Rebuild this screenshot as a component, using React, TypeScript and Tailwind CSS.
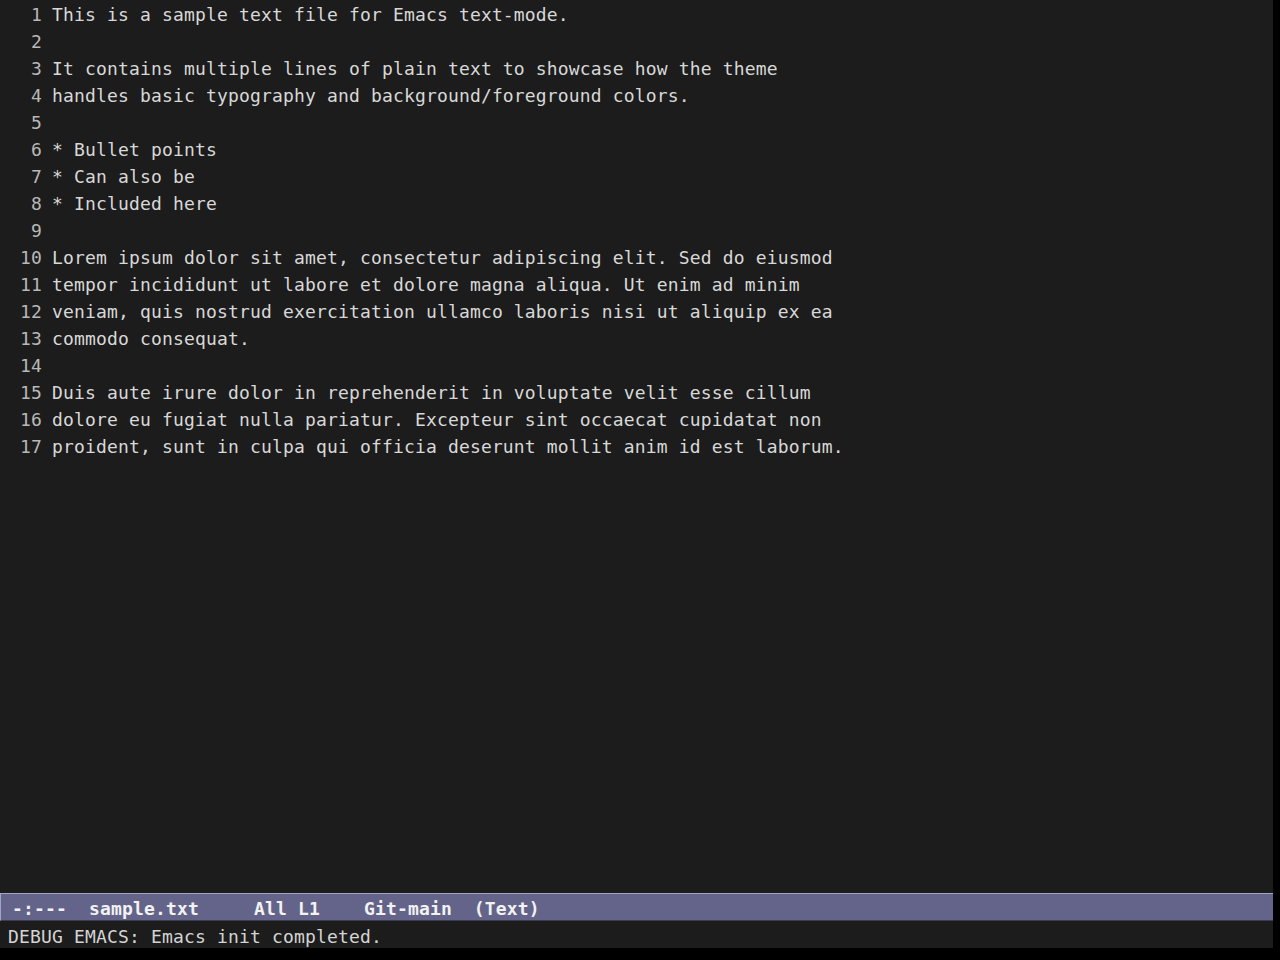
const lines = [
  "This is a sample text file for Emacs text-mode.",
  "",
  "It contains multiple lines of plain text to showcase how the theme",
  "handles basic typography and background/foreground colors.",
  "",
  "* Bullet points",
  "* Can also be",
  "* Included here",
  "",
  "Lorem ipsum dolor sit amet, consectetur adipiscing elit. Sed do eiusmod",
  "tempor incididunt ut labore et dolore magna aliqua. Ut enim ad minim",
  "veniam, quis nostrud exercitation ullamco laboris nisi ut aliquip ex ea",
  "commodo consequat.",
  "",
  "Duis aute irure dolor in reprehenderit in voluptate velit esse cillum",
  "dolore eu fugiat nulla pariatur. Excepteur sint occaecat cupidatat non",
  "proident, sunt in culpa qui officia deserunt mollit anim id est laborum.",
];

const mono = "font-['DejaVu_Sans_Mono',monospace] text-[18px] tracking-[0.16px]";

export default function App() {
  return (
    <div className="h-[960px] w-[1280px] overflow-hidden bg-black">
      <div className={`flex h-[948px] w-[1273px] flex-col bg-[#1c1c1c] ${mono}`}>
        {/* buffer */}
        <div className="flex-1 overflow-hidden pt-[1px]">
          {lines.map((text, i) => (
            <div key={i} className="flex h-[27px] items-center whitespace-pre leading-[27px]">
              <span className="w-[43px] pr-[1px] text-right text-[#b8b8b8]">{i + 1}</span>
              <span className="ml-[9px] text-[#d8d8d8]">{text}</span>
            </div>
          ))}
        </div>

        {/* mode line */}
        <div className="flex h-[28px] items-center whitespace-pre border-t border-l border-t-[#a4a4c4] border-l-[#a4a4c4] border-b border-b-[#3c3c54] bg-[#64648a] pt-[4px] font-bold leading-[22px] text-[#f2f2f2]">
          {" -:---  sample.txt     All L1    Git-main  (Text)"}
        </div>

        {/* echo area */}
        <div className="flex h-[27px] items-center whitespace-pre pl-[8px] pt-[4px] leading-[23px] text-[#d4d4d4]">
          DEBUG EMACS: Emacs init completed.
        </div>
      </div>
    </div>
  );
}
